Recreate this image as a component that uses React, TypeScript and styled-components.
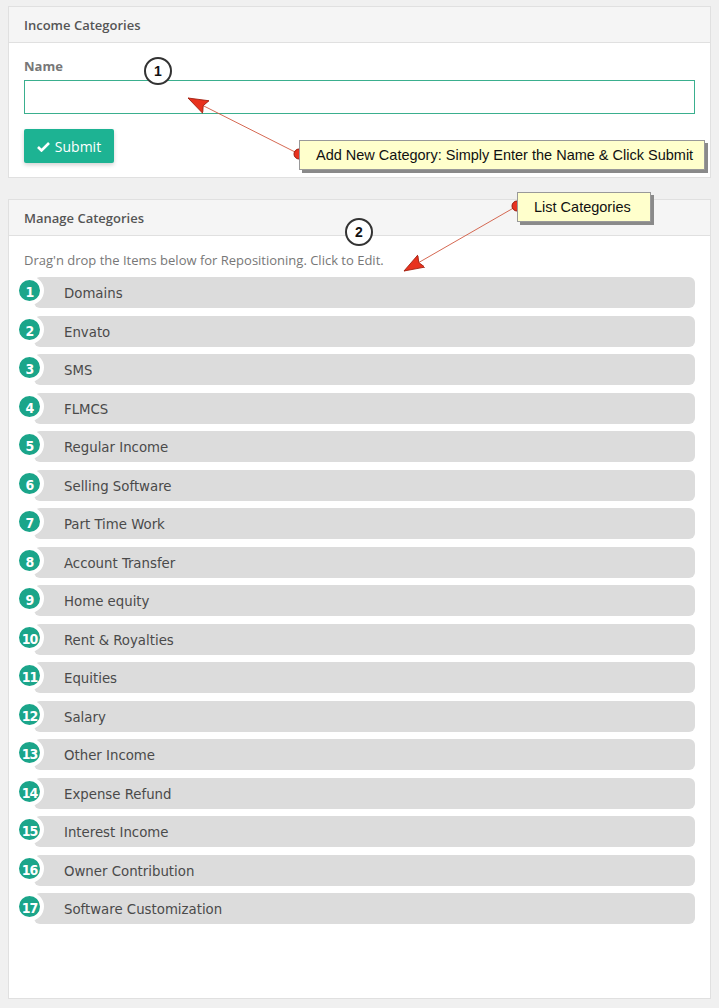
import React from "react";
import styled, { createGlobalStyle } from "styled-components";

const GlobalStyle = createGlobalStyle`
  body {
    margin: 0;
    background: #f0f0f0;
    font-family: "Open Sans", "Liberation Sans", sans-serif;
  }
`;

const Page = styled.div`
  position: relative;
  width: 719px;
  height: 1008px;
  padding: 6px 8px 0;
  box-sizing: border-box;
  display: flex;
  flex-direction: column;
  gap: 21px;
`;

const Panel = styled.div<{ $height: number }>`
  height: ${(p) => p.$height}px;
  box-sizing: border-box;
  background: #fff;
  border: 1px solid #e0e0e0;
  display: flex;
  flex-direction: column;
`;

const PanelHeader = styled.div`
  height: 36px;
  flex-shrink: 0;
  box-sizing: border-box;
  background: #f5f5f5;
  border-bottom: 1px solid #e0e0e0;
  display: flex;
  align-items: center;
  padding: 0 15px;
  font-size: 13px;
  font-weight: 600;
  color: #555;
`;

const PanelBody = styled.div<{ $top: number }>`
  padding: ${(p) => p.$top}px 15px 15px;
  display: flex;
  flex-direction: column;
  align-items: flex-start;
`;

const Label = styled.label`
  font-size: 13px;
  font-weight: 700;
  color: #777;
  line-height: 18px;
  margin: 0 0 5px;
`;

const TextInput = styled.input`
  width: 100%;
  height: 34px;
  box-sizing: border-box;
  border: 1px solid #3aaf8e;
  outline: none;
  background: #fff;
`;

const SubmitButton = styled.button`
  margin-top: 15px;
  width: 90px;
  height: 34px;
  border: none;
  border-radius: 2px;
  background: #1db393;
  color: #fff;
  font-family: "Open Sans", "Liberation Sans", sans-serif;
  font-size: 14px;
  display: flex;
  align-items: center;
  justify-content: center;
  gap: 5px;
  box-shadow: 0 2px 4px rgba(0, 0, 0, 0.18);
`;

const Hint = styled.div`
  font-size: 13px;
  color: #777;
  line-height: 18px;
  margin-bottom: 8px;
`;

const List = styled.div`
  align-self: stretch;
  display: flex;
  flex-direction: column;
  gap: 7.5px;
  padding-left: 10px;
`;

const Item = styled.div`
  position: relative;
  height: 31px;
  background: #dcdcdc;
  border-radius: 6px;
  display: flex;
  align-items: center;
  padding-left: 30px;
  font-family: "DejaVu Sans Condensed", "Liberation Sans Narrow", sans-serif;
  font-size: 14.8px;
  color: #4a4a4a;
`;

const Badge = styled.span`
  position: absolute;
  left: -19px;
  top: -1px;
  width: 21px;
  height: 18px;
  padding-top: 3px;
  border: 4px solid #fff;
  border-radius: 50%;
  background: #1ba58a;
  color: #fff;
  font-family: "DejaVu Sans Condensed", "Liberation Sans", sans-serif;
  font-weight: 700;
  font-size: 14px;
  letter-spacing: -1px;
  display: flex;
  align-items: center;
  justify-content: center;
  box-sizing: content-box;
`;

const Overlay = styled.svg`
  position: absolute;
  left: 0;
  top: 0;
  pointer-events: none;
`;

const Callout = styled.div<{ $x: number; $y: number; $w: number }>`
  position: absolute;
  left: ${(p) => p.$x}px;
  top: ${(p) => p.$y}px;
  width: ${(p) => p.$w}px;
  height: 30px;
  box-sizing: border-box;
  background: #ffffcc;
  border: 1px solid #999;
  box-shadow: 3px 3px 0 #8a8a8a;
  padding-left: 16px;
  display: flex;
  align-items: center;
  white-space: nowrap;
  font-family: "Liberation Sans", Arial, sans-serif;
  font-size: 14.5px;
  color: #111;
`;

const Step = styled.div<{ $x: number; $y: number }>`
  position: absolute;
  left: ${(p) => p.$x - 14}px;
  top: ${(p) => p.$y - 14}px;
  width: 28px;
  height: 28px;
  box-sizing: border-box;
  border: 2px solid #333;
  border-radius: 50%;
  background: #fff;
  display: flex;
  align-items: center;
  justify-content: center;
  font-family: "Liberation Sans", Arial, sans-serif;
  font-weight: 700;
  font-size: 14px;
  color: #111;
`;

const categories = [
  "Domains",
  "Envato",
  "SMS",
  "FLMCS",
  "Regular Income",
  "Selling Software",
  "Part Time Work",
  "Account Transfer",
  "Home equity",
  "Rent & Royalties",
  "Equities",
  "Salary",
  "Other Income",
  "Expense Refund",
  "Interest Income",
  "Owner Contribution",
  "Software Customization",
];

const CheckIcon = () => (
  <svg width="13" height="11" viewBox="0 0 13 11">
    <path d="M1 6 L4.5 9.5 L12 2" fill="none" stroke="#fff" strokeWidth="2.6" />
  </svg>
);

const Arrow = ({ x1, y1, x2, y2 }: { x1: number; y1: number; x2: number; y2: number }) => (
  <g>
    <line x1={x1} y1={y1} x2={x2} y2={y2} stroke="#d0583f" strokeWidth="0.9" markerEnd="url(#head)" />
    <circle cx={x1} cy={y1} r="5" fill="#e8321e" stroke="#9a1a0c" strokeWidth="1" />
  </g>
);

const App: React.FC = () => {
  return (
    <Page>
      <GlobalStyle />
      <Panel $height={172}>
        <PanelHeader>Income Categories</PanelHeader>
        <PanelBody $top={14}>
          <Label>Name</Label>
          <TextInput type="text" />
          <SubmitButton>
            <CheckIcon />
            Submit
          </SubmitButton>
        </PanelBody>
      </Panel>
      <Panel $height={800}>
        <PanelHeader>Manage Categories</PanelHeader>
        <PanelBody $top={15}>
          <Hint>Drag'n drop the Items below for Repositioning. Click to Edit.</Hint>
          <List>
            {categories.map((name, i) => (
              <Item key={name}>
                <Badge>{i + 1}</Badge>
                {name}
              </Item>
            ))}
          </List>
        </PanelBody>
      </Panel>

      <Overlay width="719" height="1008">
        <defs>
          <marker id="head" markerWidth="22" markerHeight="16" refX="20" refY="8" orient="auto" markerUnits="userSpaceOnUse">
            <path d="M0 1 L20 8 L0 15 L3 8 Z" fill="#e8321e" stroke="#a02010" strokeWidth="0.8" />
          </marker>
        </defs>
        <Arrow x1={299} y1={154} x2={188} y2={98} />
        <Arrow x1={517} y1={206} x2={404} y2={271} />
      </Overlay>
      <Step $x={158} $y={71}>1</Step>
      <Step $x={359} $y={232}>2</Step>
      <Callout $x={299} $y={140} $w={406}>Add New Category: Simply Enter the Name &amp; Click Submit</Callout>
      <Callout $x={517} $y={192} $w={134}>List Categories</Callout>
    </Page>
  );
};

export default App;
